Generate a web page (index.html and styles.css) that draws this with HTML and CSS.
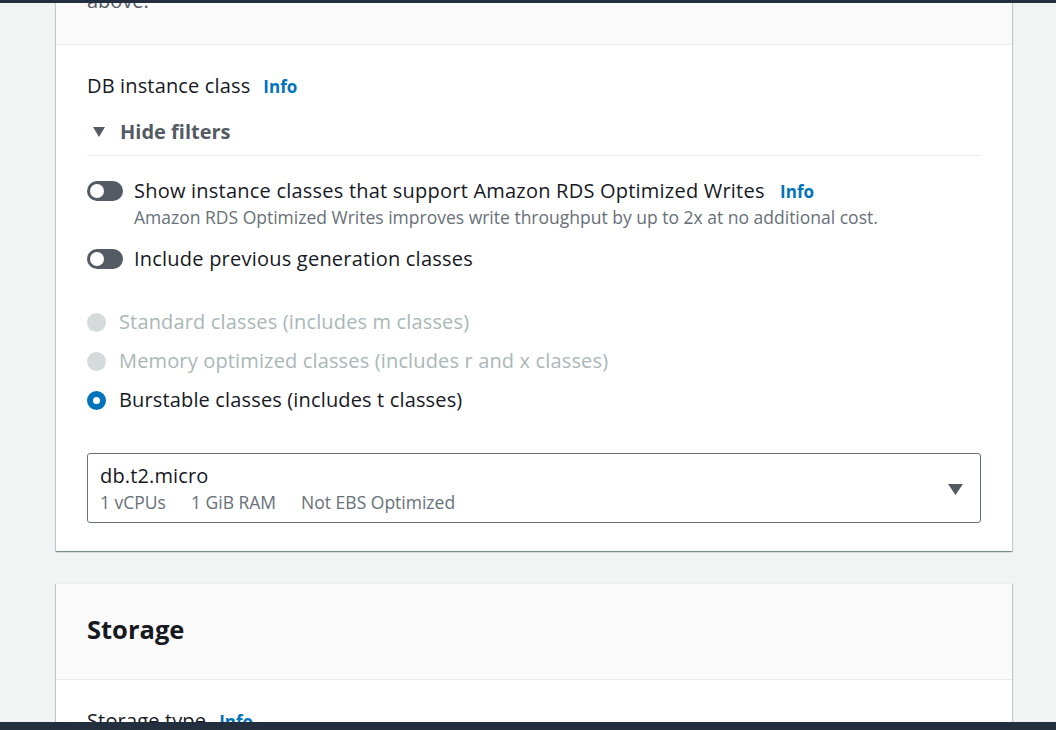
FILE: index.html
```html
<!DOCTYPE html>
<html lang="en">
<head>
<meta charset="utf-8">
<title>DB instance class</title>
<link rel="stylesheet" href="styles.css">
</head>
<body>
<div class="topbar"></div>
<main class="page">
  <section class="card">
    <div class="card-header card-header--scrolled">
      <p class="header-desc">above.</p>
    </div>
    <div class="card-body">
      <div class="field-label">
        <span class="label-text">DB instance class</span>
        <a class="info" href="#">Info</a>
      </div>
      <div class="filters-toggle">
        <svg class="caret-down" width="12" height="10" viewBox="0 0 12 10"><path d="M0 0 H12 L6 10 Z" fill="#545b64"/></svg>
        <span>Hide filters</span>
      </div>
      <div class="divider"></div>
      <div class="toggle-row">
        <span class="toggle"><span class="knob"></span></span>
        <div class="toggle-text">
          <div class="toggle-label">Show instance classes that support Amazon RDS Optimized Writes <a class="info" href="#">Info</a></div>
          <div class="toggle-desc">Amazon RDS Optimized Writes improves write throughput by up to 2x at no additional cost.</div>
        </div>
      </div>
      <div class="toggle-row toggle-row--second">
        <span class="toggle"><span class="knob"></span></span>
        <div class="toggle-text">
          <div class="toggle-label">Include previous generation classes</div>
        </div>
      </div>
      <div class="radio-group">
        <div class="radio-row disabled"><span class="radio radio--disabled"></span><span>Standard classes (includes m classes)</span></div>
        <div class="radio-row disabled"><span class="radio radio--disabled"></span><span>Memory optimized classes (includes r and x classes)</span></div>
        <div class="radio-row"><span class="radio radio--checked"></span><span>Burstable classes (includes t classes)</span></div>
      </div>
      <div class="select">
        <div class="select-text">
          <div class="select-value">db.t2.micro</div>
          <div class="select-tags"><span>1 vCPUs</span><span>1 GiB RAM</span><span>Not EBS Optimized</span></div>
        </div>
        <svg class="select-caret" width="15" height="11" viewBox="0 0 15 11"><path d="M0 0 H15 L7.5 11 Z" fill="#545b64"/></svg>
      </div>
    </div>
  </section>

  <section class="card card--storage">
    <div class="card-header">
      <h2 class="card-title">Storage</h2>
    </div>
    <div class="card-body">
      <div class="field-label">
        <span class="label-text">Storage type</span>
        <a class="info" href="#">Info</a>
      </div>
    </div>
  </section>
</main>
<div class="bottombar"></div>
</body>
</html>
```

FILE: styles.css
```css
html, body {
  margin: 0;
  padding: 0;
}
body {
  background: #f2f3f3;
  font-family: "Open Sans", "Noto Sans", Arial, sans-serif;
  color: #16191f;
  height: 730px;
  overflow: hidden;
}
.topbar {
  position: fixed;
  top: 0; left: 0; right: 0;
  height: 3px;
  background: #232f3e;
  z-index: 10;
}
.bottombar {
  position: fixed;
  bottom: 0; left: 0; right: 0;
  height: 8px;
  background: #232f3e;
  z-index: 10;
}
.page {
  margin-top: -11px;
  padding-left: 56px;
  width: 956px;
  display: flex;
  flex-direction: column;
  gap: 32px;
}
.card {
  background: #fff;
  box-shadow: 0 1px 1px 0 rgba(0,28,36,.3), 1px 1px 1px 0 rgba(0,28,36,.15), -1px 1px 1px 0 rgba(0,28,36,.15);
  border-top: 1px solid #eaeded;
}
.card-header {
  background: #fafafa;
  border-bottom: 1px solid #eaeded;
  padding: 0 31px 32px;
}
.header-desc {
  margin: 0;
  font-size: 20px;
  line-height: 22px;
  color: #545b64;
}
.card-body {
  padding: 29px 31px 28px;
}
.field-label {
  display: flex;
  align-items: baseline;
  gap: 13px;
  font-size: 20px;
  line-height: 24px;
  letter-spacing: 0.15px;
}
.info {
  color: #0073bb;
  font-weight: 700;
  font-size: 17px;
  letter-spacing: 0;
  text-decoration: none;
}
.filters-toggle {
  margin-top: 21px;
  display: flex;
  align-items: center;
  gap: 15px;
  padding-left: 6px;
  font-size: 20px;
  line-height: 24px;
  font-weight: 700;
  color: #545b64;
}
.divider {
  margin-top: 11px;
  height: 1px;
  background: #eaeded;
}
.toggle-row {
  margin-top: 23px;
  display: flex;
  align-items: flex-start;
  gap: 11px;
}
.toggle-row--second {
  margin-top: 19px;
}
.toggle {
  flex: none;
  width: 36px;
  height: 20px;
  margin-top: 2px;
  border-radius: 10px;
  background: #545b64;
  display: flex;
  align-items: center;
  padding: 0 3px;
  box-sizing: border-box;
}
.knob {
  width: 14px;
  height: 14px;
  border-radius: 50%;
  background: #fff;
}
.toggle-label {
  font-size: 20px;
  line-height: 24px;
  letter-spacing: 0.22px;
}
.toggle-label .info {
  margin-left: 10px;
}
.toggle-desc {
  margin-top: 2px;
  font-size: 17.5px;
  line-height: 22px;
  color: #687078;
}
.radio-group {
  margin-top: 39px;
  display: flex;
  flex-direction: column;
  gap: 15px;
}
.radio-row {
  display: flex;
  align-items: center;
  gap: 13px;
  font-size: 20px;
  line-height: 24px;
  letter-spacing: 0.15px;
}
.radio-row.disabled {
  color: #aab7b8;
}
.radio {
  flex: none;
  width: 19px;
  height: 19px;
  border-radius: 50%;
  box-sizing: border-box;
}
.radio--disabled {
  background: #d5dbdb;
}
.radio--checked {
  background: #fff;
  border: 6px solid #0073bb;
}
.select {
  margin-top: 41px;
  border: 1px solid #687078;
  border-radius: 3px;
  height: 70px;
  box-sizing: border-box;
  display: flex;
  align-items: center;
  justify-content: space-between;
  padding: 0 17px 0 12px;
}
.select-text {
  display: flex;
  flex-direction: column;
}
.select-value {
  font-size: 20px;
  line-height: 24px;
  letter-spacing: 0.15px;
}
.select-tags {
  margin-top: 3px;
  display: flex;
  gap: 25px;
  font-size: 17.5px;
  line-height: 22px;
  color: #687078;
}
.select-caret {
  margin-top: 2px;
}
.card--storage .card-header {
  padding: 30px 31px 35px;
}
.card-title {
  margin: 0;
  font-size: 25.5px;
  line-height: 30px;
  font-weight: 700;
}
```
